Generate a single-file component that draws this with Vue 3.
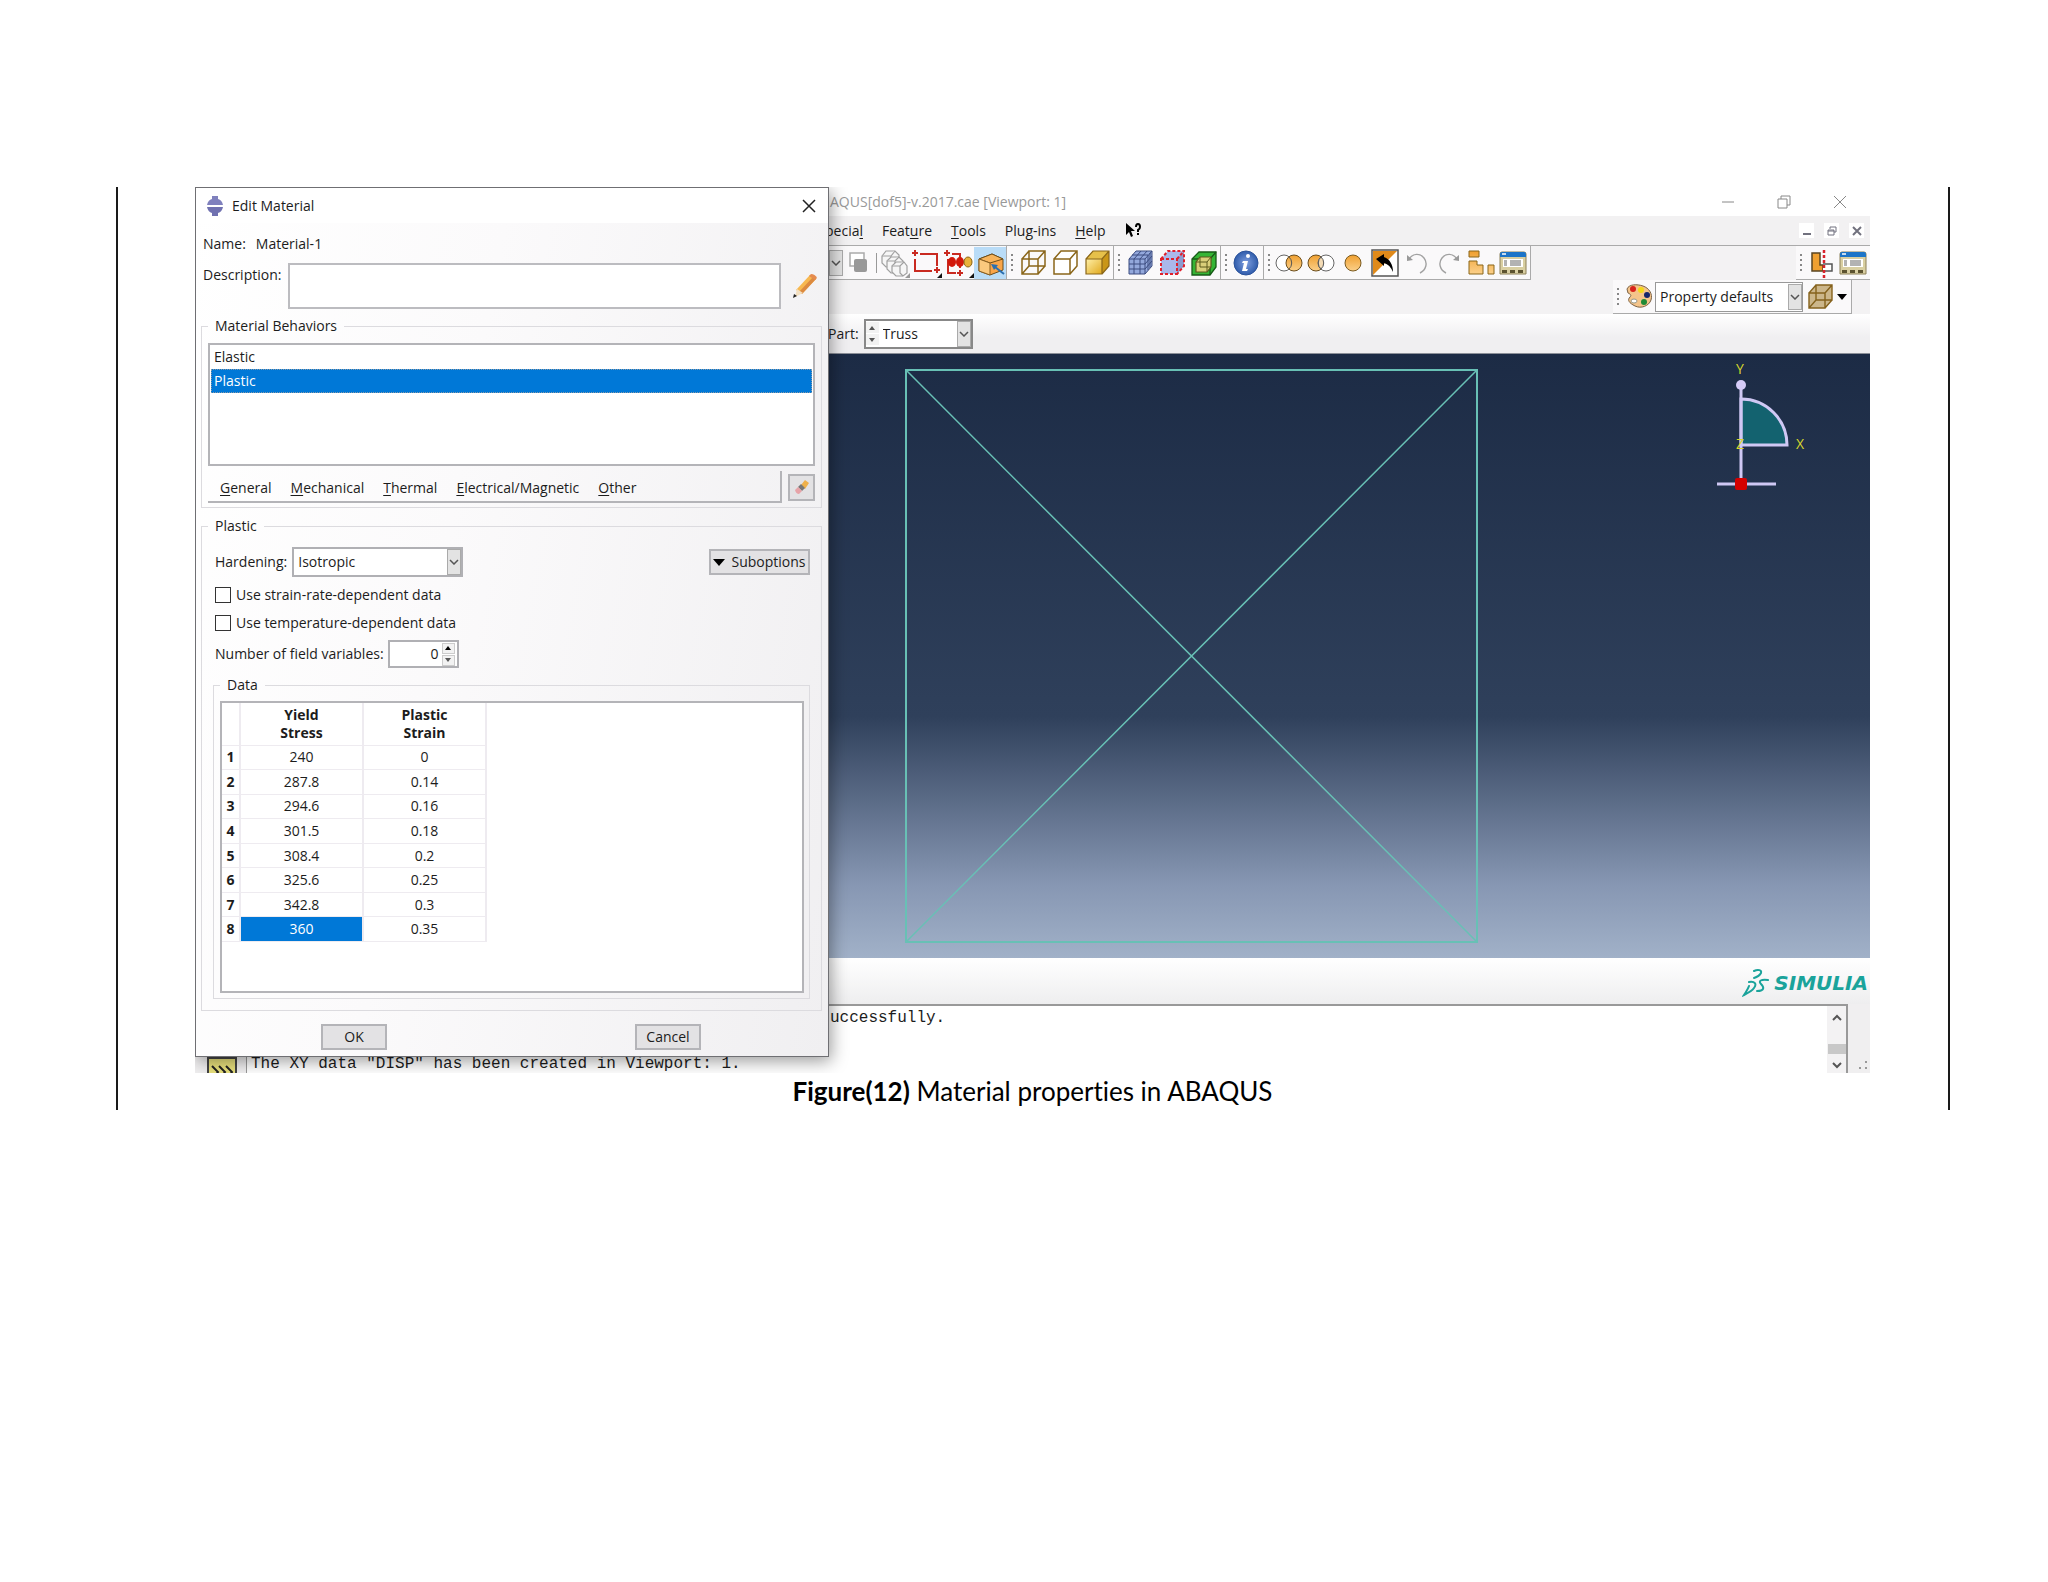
<script setup>
import {ref} from 'vue'

const behaviors = ['Elastic', 'Plastic']
const selectedBehavior = ref('Plastic')

const behaviorMenus = ['General', 'Mechanical', 'Thermal', 'Electrical/Magnetic', 'Other']

const rows = ref([
  {stress: '240', strain: '0'},
  {stress: '287.8', strain: '0.14'},
  {stress: '294.6', strain: '0.16'},
  {stress: '301.5', strain: '0.18'},
  {stress: '308.4', strain: '0.2'},
  {stress: '325.6', strain: '0.25'},
  {stress: '342.8', strain: '0.3'},
  {stress: '360', strain: '0.35'}
])
const selectedRow = ref(7)

// before / underlined letter / after
const menus = [
  ['pecia', 'l', ''],
  ['Feat', 'u', 're'],
  ['', 'T', 'ools'],
  ['Plu', 'g', '-ins'],
  ['', 'H', 'elp']
]

const toolGroups = [
  ['wire', 'hidden', 'shaded'],
  ['mesh', 'seeds', 'nested'],
  ['info'],
  ['replace', 'intersect', 'single', 'swap', 'undo', 'redo', 'shapes', 'panel']
]

const description = ref('')
const strainRate = ref(false)
const temperature = ref(false)
const fieldVariables = ref(0)

/**
 * stepVariables
 * @param by
 */
const stepVariables = (by) => {
  fieldVariables.value = Math.max(0, Number(fieldVariables.value) + by)
}
</script>

<template>
  <svg class="defs" width="0" height="0" aria-hidden="true">
    <defs>
      <linearGradient id="gold" x1="0" y1="0" x2="1" y2="1">
        <stop offset="0" stop-color="#fff0a8"/>
        <stop offset="1" stop-color="#e0a81c"/>
      </linearGradient>
      <linearGradient id="orange" x1="0" y1="0" x2="0" y2="1">
        <stop offset="0" stop-color="#f0a030"/>
        <stop offset="1" stop-color="#fbd08a"/>
      </linearGradient>
      <radialGradient id="blue">
        <stop offset="0" stop-color="#7f9fe0"/>
        <stop offset="1" stop-color="#2f5cab"/>
      </radialGradient>
    </defs>
    <symbol id="i-copy" viewBox="0 0 32 32">
      <rect x="7" y="6" width="14" height="13" fill="#fff" stroke="#aaa" stroke-width="1.5"/>
      <rect x="11" y="12" width="13" height="13" rx="2" fill="#999"/>
    </symbol>
    <symbol id="i-chain" viewBox="0 0 32 32">
      <g fill="#f6f6f6" stroke="#a0a0a0" stroke-width="1.2">
        <path d="M4 9l4-5h9l4 4v8l-4 4H8l-4-4z"/>
        <path d="M4 9h9l4-5M13 9v8"/>
        <path d="M9 14l4-4h8l4 4v8l-4 4h-8l-4-4z"/>
        <path d="M9 14h8l4-4M17 14v8"/>
        <path d="M14 19l4-4h8l3 4v7l-4 3h-7l-4-4z"/>
        <path d="M14 19h8l4-4M22 19v7l3 3"/>
      </g>
      <path d="M32 26v5h-5z" fill="#999"/>
    </symbol>
    <symbol id="i-box" viewBox="0 0 32 32">
      <g fill="none" stroke="#c92a20" stroke-width="2">
        <path d="M10 7h17v12M5 12v12h17"/>
        <path d="M2 6h6M5 3v6M24 23h6M27 20v6"/>
      </g>
      <path d="M32 26v5h-5z" fill="#111"/>
    </symbol>
    <symbol id="i-dots" viewBox="0 0 32 32">
      <g fill="none" stroke="#c92a20" stroke-width="2">
        <path d="M10 7h8v14M6 12v14h8"/>
        <path d="M2 6h6M5 3v6M15 26h6M18 23v6"/>
      </g>
      <ellipse cx="10" cy="15" rx="4" ry="5" fill="#d2190b"/>
      <ellipse cx="18" cy="15" rx="4" ry="5" fill="#d2190b"/>
      <ellipse cx="26" cy="15" rx="4" ry="5" fill="#e8b23a" stroke="#8a6414"/>
      <path d="M32 26v5h-5z" fill="#111"/>
    </symbol>
    <symbol id="i-solid" viewBox="0 0 32 32">
      <path d="M5 12l13-5 11 5v11l-13 5-11-4z" fill="#f9a548" stroke="#6b4d1c"/>
      <path d="M5 12l13-5 11 5-13 4z" fill="#f7b45c" stroke="#6b4d1c"/>
      <path d="M5 12l11 4v12l-11-4z" fill="#fbc97e" stroke="#8a5f20"/>
      <path d="M30 27l-9-7" stroke="#2a6fb0" stroke-width="2"/>
      <path d="M17 17l7 1-4 5z" fill="#2a6fb0"/>
    </symbol>
    <symbol id="i-wire" viewBox="0 0 32 32">
      <path d="M5 12h16v15H5zM12 4h16v15H12zM5 12l7-8M21 12l7-8M5 27l7-8M21 27l7-8" fill="none" stroke="#8a661a" stroke-width="1.5"/>
    </symbol>
    <symbol id="i-hidden" viewBox="0 0 32 32">
      <path d="M5 12h16v15H5zM5 12l7-8h16v15l-7 8M21 12l7-8" fill="#fff" stroke="#8a661a" stroke-width="1.5"/>
    </symbol>
    <symbol id="i-shaded" viewBox="0 0 32 32">
      <path d="M5 12l7-8h16v15l-7 8H5z" fill="#c99618"/>
      <path d="M5 12l7-8h16l-7 8z" fill="#e6c04a"/>
      <path d="M5 12h16v15H5z" fill="url(#gold)"/>
      <path d="M5 12h16v15H5zM5 12l7-8h16v15l-7 8M21 12l7-8" fill="none" stroke="#8a661a" stroke-width="1.2"/>
    </symbol>
    <symbol id="i-mesh" viewBox="0 0 32 32">
      <path d="M5 12l7-8h16v15l-7 8H5z" fill="#93a8dc"/>
      <path d="M5 12h16v15M10 12v15M16 12v15M5 17h16l7-8M5 22h16l7-8M10 12l7-8M16 12l7-8M21 12l7-8M8 8h16v15M26 6v15M5 12v15h16l7-8V4H12z" fill="none" stroke="#3c4d80" stroke-width="1"/>
    </symbol>
    <symbol id="i-seeds" viewBox="0 0 32 32">
      <path d="M5 12l7-8h16v15l-7 8H5z" fill="#aab8ea"/>
      <path d="M21 12l7-8v15l-7 8z" fill="#8d9cd0"/>
      <path d="M5 12h16v15H5zM5 12l7-8h16v15l-7 8M21 12l7-8" fill="none" stroke="#e0202c" stroke-width="2" stroke-dasharray="3 2"/>
    </symbol>
    <symbol id="i-nested" viewBox="0 0 32 32">
      <path d="M4 12l7-7h17v15l-6 8H4z" fill="#35b535" stroke="#175a17" stroke-width="1.3"/>
      <path d="M4 12h18v16M22 12l6-7" fill="none" stroke="#175a17" stroke-width="1.3"/>
      <path d="M8 15l4-5h11v10l-4 5H8z" fill="#d9cf7a" stroke="#5c5a1c" stroke-width="1.2"/>
      <path d="M8 15h11v10M19 15l4-5M12 10v10h11" fill="none" stroke="#5c5a1c" stroke-width="1"/>
    </symbol>
    <symbol id="i-info" viewBox="0 0 32 32">
      <circle cx="15" cy="16" r="12" fill="url(#blue)" stroke="#2c539b"/>
      <circle cx="17" cy="9" r="2" fill="#fff"/>
      <path d="M12 14h5l-2 8h2l-1 2h-5l2-8h-2z" fill="#fff"/>
    </symbol>
    <symbol id="i-replace" viewBox="0 0 32 32">
      <circle cx="10" cy="16" r="8" fill="#fff" stroke="#666"/>
      <circle cx="20" cy="16" r="8" fill="url(#orange)" stroke="#6b4d1c"/>
      <path d="M15 10a8 8 0 0 1 0 12" fill="none" stroke="#555"/>
    </symbol>
    <symbol id="i-intersect" viewBox="0 0 32 32">
      <circle cx="10" cy="16" r="8" fill="url(#orange)" stroke="#6b4d1c"/>
      <circle cx="20" cy="16" r="8" fill="#fff" stroke="#666"/>
      <path d="M15 10a8 8 0 0 1 0 12 8 8 0 0 1 0-12" fill="#f4dcb6" stroke="#555"/>
    </symbol>
    <symbol id="i-single" viewBox="0 0 32 32">
      <circle cx="15" cy="16" r="8" fill="url(#orange)" stroke="#7a5a20"/>
    </symbol>
    <symbol id="i-swap" viewBox="0 0 32 32">
      <rect x="2" y="3" width="26" height="26" fill="#fff" stroke="#555" stroke-width="1.5"/>
      <path d="M3 4h24L3 28z" fill="#e08a1a"/>
      <path d="M6 12l8-5v3c6 2 9 8 9 15-2-5-5-8-9-9v3z" fill="#000"/>
    </symbol>
    <symbol id="i-undo" viewBox="0 0 32 32">
      <path d="M7 12c4-6 11-6 15-1s2 12-4 15" fill="none" stroke="#a2a2a2" stroke-width="1.4"/>
      <path d="M5 8v6l6-1z" fill="#999"/>
    </symbol>
    <symbol id="i-redo" viewBox="0 0 32 32">
      <path d="M23 12c-4-6-11-6-15-1s-2 12 4 15" fill="none" stroke="#a2a2a2" stroke-width="1.4"/>
      <path d="M25 8v6l-6-1z" fill="#999"/>
    </symbol>
    <symbol id="i-shapes" viewBox="0 0 32 32">
      <g fill="url(#orange)" stroke="#8a661a">
        <path d="M3 4h10v6H3zM3 14h8v4h6v9H3zM22 18h6v9h-6z"/>
      </g>
    </symbol>
    <symbol id="i-panel" viewBox="0 0 32 32">
      <path d="M2 7q0-2 2-2h22q2 0 2 2v20H2z" fill="#d9cfa2" stroke="#8c8058"/>
      <path d="M2 7q0-2 2-2h22q2 0 2 2v3H2z" fill="#1c74c8"/>
      <path d="M4 7h4" stroke="#fff" stroke-width="1.5"/>
      <rect x="5" y="12" width="20" height="8" fill="#fff"/>
      <path d="M6 14h3M6 16h3M6 18h3M12 14h11M12 16h11M12 18h11" stroke="#666"/>
      <path d="M4 23h5v3H4zM12 23h5v3h-5zM20 23h5v3h-5z" fill="#5c5330"/>
    </symbol>
    <symbol id="i-section" viewBox="0 0 32 32">
      <path d="M6 6h8v12h3v6H6z" fill="#f0a030" stroke="#5a4420" stroke-width="1.5"/>
      <path d="M17 17h9v7h-9" fill="#fff" stroke="#555" stroke-width="1.5"/>
      <path d="M18 3v28" stroke="#d8232c" stroke-width="2.5" stroke-dasharray="3 2"/>
    </symbol>
    <symbol id="i-palette" viewBox="0 0 32 32">
      <path d="M4 8c2-5 10-5 16-3s10 8 8 14-10 9-16 6-8-6-5-9c2-2 0-3-2-4z" fill="#f5c48a" stroke="#7b6244"/>
      <circle cx="10" cy="8" r="3" fill="#d8231c"/>
      <circle cx="18" cy="9" r="3" fill="#f4d81a"/>
      <circle cx="24" cy="14" r="3" fill="#14246c"/>
      <circle cx="21" cy="21" r="3" fill="#1f8a35"/>
      <ellipse cx="11" cy="20" rx="3" ry="2" fill="#fff" stroke="#998"/>
    </symbol>
    <symbol id="i-translucent" viewBox="0 0 32 32">
      <path d="M4 12l7-8h16v15l-7 8H4z" fill="#ccb68a"/>
      <path d="M4 12h16v15H4zM11 4h16v15H11zM4 12l7-8M20 12l7-8M4 27l7-8M20 27l7-8" fill="none" stroke="#85621c" stroke-width="1.4"/>
    </symbol>
  </svg>

  <main class="page">
    <figure class="frame">
      <div class="desktop">
        <section class="app">
          <header class="app-title">
            <span class="app-name">AQUS[dof5]-v.2017.cae [Viewport: 1]</span>
            <div class="win-buttons">
              <button aria-label="Minimize">
                <svg width="14" height="14" viewBox="0 0 14 14"><path d="M1 7h12"/></svg>
              </button>
              <button aria-label="Restore">
                <svg width="14" height="14" viewBox="0 0 14 14"><path d="M1 4h9v9H1zM4 4V1h9v9h-3"/></svg>
              </button>
              <button aria-label="Close">
                <svg width="14" height="14" viewBox="0 0 14 14"><path d="M1 1l12 12M13 1L1 13"/></svg>
              </button>
            </div>
          </header>

          <nav class="menubar">
            <button v-for="menu in menus" :key="menu[1]">{{ menu[0] }}<u>{{ menu[1] }}</u>{{ menu[2] }}</button>
            <button aria-label="Context help">
              <svg width="17" height="16" viewBox="0 0 17 16">
                <path d="M1 0v12l3-3 2 5 2-1-2-5h4z" fill="#000"/>
                <path d="M11 4q0-3 2-3t2 3q0 2-2 3v2M13 10v2" fill="none" stroke="#000" stroke-width="2"/>
              </svg>
            </button>
            <div class="mdi-buttons">
              <button aria-label="Minimize viewport">
                <svg width="10" height="10" viewBox="0 0 10 10"><path d="M1 8h8" stroke-width="2"/></svg>
              </button>
              <button aria-label="Restore viewport">
                <svg width="10" height="10" viewBox="0 0 10 10"><path d="M3 3V1h6v5H7M1 4h6v5H1zM1 5h6"/></svg>
              </button>
              <button aria-label="Close viewport">
                <svg width="10" height="10" viewBox="0 0 10 10"><path d="M1 1l8 8M9 1L1 9" stroke-width="2"/></svg>
              </button>
            </div>
          </nav>

          <div class="toolbar">
            <div class="tools tools-first">
              <button class="arrow-box" aria-label="More">
                <svg width="10" height="6" viewBox="0 0 10 6"><path d="M1 1l4 4 4-4"/></svg>
              </button>
              <button class="tool" aria-label="copy"><svg><use href="#i-copy"/></svg></button>
              <span class="divider"></span>
              <button class="tool" aria-label="chain"><svg><use href="#i-chain"/></svg></button>
              <button class="tool" aria-label="box"><svg><use href="#i-box"/></svg></button>
              <button class="tool" aria-label="dots"><svg><use href="#i-dots"/></svg></button>
              <button class="tool active" aria-label="solid"><svg><use href="#i-solid"/></svg></button>
            </div>
            <div v-for="(group, index) in toolGroups" :key="index" class="tools">
              <span class="grip"></span>
              <button v-for="icon in group" :key="icon" class="tool" :aria-label="icon">
                <svg><use :href="`#i-${icon}`"/></svg>
              </button>
            </div>
            <div class="tools tools-last">
              <span class="grip"></span>
              <button class="tool" aria-label="section"><svg><use href="#i-section"/></svg></button>
              <button class="tool" aria-label="panel"><svg><use href="#i-panel"/></svg></button>
            </div>
          </div>

          <div class="toolbar toolbar-color">
            <div class="tools">
              <span class="grip"></span>
              <button class="tool" aria-label="palette"><svg><use href="#i-palette"/></svg></button>
              <div class="combo combo-color">
                <select aria-label="Color code">
                  <option>Property defaults</option>
                </select>
                <span class="arrow-box">
                  <svg width="10" height="6" viewBox="0 0 10 6"><path d="M1 1l4 4 4-4"/></svg>
                </span>
              </div>
              <button class="tool" aria-label="translucent"><svg><use href="#i-translucent"/></svg></button>
              <button class="drop" aria-label="Translucency">
                <svg width="10" height="6" viewBox="0 0 10 6"><path d="M0 0h10L5 6z"/></svg>
              </button>
            </div>
          </div>

          <div class="context">
            <label for="part">Part:</label>
            <div class="combo combo-part">
              <span class="spin">
                <button aria-label="Previous part"><svg width="6" height="4" viewBox="0 0 6 4"><path d="M0 4l3-4 3 4z"/></svg></button>
                <button aria-label="Next part"><svg width="6" height="4" viewBox="0 0 6 4"><path d="M0 0l3 4 3-4z"/></svg></button>
              </span>
              <select id="part">
                <option>Truss</option>
              </select>
              <span class="arrow-box">
                <svg width="10" height="6" viewBox="0 0 10 6"><path d="M1 1l4 4 4-4"/></svg>
              </span>
            </div>
          </div>

          <div class="viewport">
            <svg viewBox="0 0 1675 604" role="img" aria-label="Truss wireframe">
              <g fill="none" stroke="#68c0b5">
                <path d="M711 16h571v572H711z" stroke-width="2"/>
                <path d="M711 16l571 572M1282 16L711 588" stroke-width="1.5"/>
              </g>
              <path d="M1546 45a46 46 0 0 1 46 46h-46z" fill="#13626f" stroke="#cfc8f4" stroke-width="3"/>
              <path d="M1546 32v98M1522 130h59" stroke="#cfc8f4" stroke-width="3"/>
              <circle cx="1546" cy="31" r="5" fill="#d6ccf8"/>
              <rect x="1540" y="124" width="12" height="12" rx="2" fill="#d40000"/>
              <g class="axis" text-anchor="middle">
                <text x="1545" y="20">Y</text>
                <text x="1545" y="95">Z</text>
                <text x="1605" y="95">X</text>
              </g>
            </svg>
          </div>

          <div class="brand">
            <svg width="28" height="30" viewBox="0 0 28 30">
              <g fill="none" stroke="#1aa39b" stroke-width="2" stroke-linecap="round">
                <path d="M12 3c4-2 8-1 7 2-1 2-4 4-7 5"/>
                <path d="M7 14c6-1 8 2 5 6-2 3-6 5-10 7 2-3 4-6 5-9"/>
                <path d="M26 12c-7-1-10 1-7 4s4 7-4 7"/>
              </g>
            </svg>
            <span>SIMULIA</span>
          </div>

          <div class="messages">
            <div class="message-side">
              <svg width="30" height="30" viewBox="0 0 30 30">
                <rect x="1" y="1" width="28" height="28" fill="#e8e07c" stroke="#444" stroke-width="2"/>
                <path d="M5 9l6 6-4 5M12 9l6 6-4 5M19 9l6 6-4 5" fill="none" stroke="#222" stroke-width="2"/>
              </svg>
            </div>
            <div class="message-text">
              <p class="message-tail">uccessfully.</p>
              <p>The XY data "DISP" has been created in Viewport: 1.</p>
            </div>
            <div class="scrollbar">
              <svg width="10" height="8" viewBox="0 0 10 8"><path d="M1 6l4-4 4 4"/></svg>
              <span class="thumb"></span>
              <svg width="10" height="8" viewBox="0 0 10 8"><path d="M1 2l4 4 4-4"/></svg>
            </div>
            <div class="message-corner">
              <svg width="10" height="10" viewBox="0 0 10 10">
                <path d="M7 0h2v2H7zM7 6h2v2H7zM1 6h2v2H1z" fill="#999"/>
              </svg>
            </div>
          </div>
        </section>

        <form class="dialog" @submit.prevent>
          <header class="dialog-title">
            <svg width="18" height="20" viewBox="0 0 18 20">
              <path d="M6 0h6v3q4 1 5 6H1q1-5 5-6z" fill="#7f80bd"/>
              <path d="M6 20h6v-3q4-1 5-6H1q1 5 5 6z" fill="#7071b0"/>
            </svg>
            <h1>Edit Material</h1>
            <button type="button" aria-label="Close">
              <svg width="14" height="14" viewBox="0 0 14 14"><path d="M1 1l12 12M13 1L1 13"/></svg>
            </button>
          </header>

          <div class="dialog-body">
            <div class="name-row">
              <span>Name:</span>
              <span>Material-1</span>
            </div>

            <div class="description-row">
              <label for="description">Description:</label>
              <textarea id="description" v-model="description"></textarea>
              <button type="button" aria-label="Edit description">
                <svg width="26" height="26" viewBox="0 0 26 26">
                  <path d="M18 2l6 4L10 21l-6-4z" fill="#f7b850"/>
                  <path d="M21 4l3 2L10 21l-3-2z" fill="#dc8a40"/>
                  <path d="M19 1q4 0 6 4l-2 2-6-4z" fill="#e58b4e"/>
                  <path d="M5 16l6 4-8 4z" fill="#f3dfc0"/>
                  <path d="M2 21l3 2-4 2z" fill="#222"/>
                </svg>
              </button>
            </div>

            <fieldset class="behaviors">
              <legend>Material Behaviors</legend>
              <ul class="list" role="listbox" aria-label="Material Behaviors">
                <li
                    v-for="item in behaviors"
                    :key="item"
                    role="option"
                    :aria-selected="item === selectedBehavior"
                    :class="{selected: item === selectedBehavior}"
                    @click="selectedBehavior = item"
                >{{ item }}</li>
              </ul>
              <div class="behavior-bar">
                <nav class="behavior-menus">
                  <button v-for="menu in behaviorMenus" :key="menu" type="button"><u>{{ menu[0] }}</u>{{ menu.slice(1) }}</button>
                </nav>
                <button class="eraser" type="button" aria-label="Delete behavior">
                  <svg width="16" height="16" viewBox="0 0 16 16">
                    <path d="M11 1l4 3-4 6-4-4z" fill="#eeb04a"/>
                    <path d="M7 5l4 4-3 3-4-4z" fill="#777"/>
                    <path d="M4 8l4 4-3 3q-3 0-4-4z" fill="#e7a3a8"/>
                  </svg>
                </button>
              </div>
            </fieldset>

            <fieldset class="plastic">
              <legend>Plastic</legend>
              <div class="hardening-row">
                <label for="hardening">Hardening:</label>
                <div class="combo combo-hardening">
                  <select id="hardening">
                    <option>Isotropic</option>
                  </select>
                  <span class="arrow-box">
                    <svg width="10" height="6" viewBox="0 0 10 6"><path d="M1 1l4 4 4-4"/></svg>
                  </span>
                </div>
                <button class="push suboptions" type="button">
                  <svg width="12" height="7" viewBox="0 0 12 7"><path d="M0 0h12L6 7z"/></svg>
                  Suboptions
                </button>
              </div>
              <label class="check"><input v-model="strainRate" type="checkbox">Use strain-rate-dependent data</label>
              <label class="check"><input v-model="temperature" type="checkbox">Use temperature-dependent data</label>
              <div class="variables-row">
                <label for="variables">Number of field variables:</label>
                <div class="number">
                  <input id="variables" v-model="fieldVariables" type="text">
                  <span class="spin spin-raised">
                    <button type="button" aria-label="Increase" @click="stepVariables(1)"><svg width="6" height="4" viewBox="0 0 6 4"><path d="M0 4l3-4 3 4z"/></svg></button>
                    <button type="button" aria-label="Decrease" @click="stepVariables(-1)"><svg width="6" height="4" viewBox="0 0 6 4"><path d="M0 0l3 4 3-4z"/></svg></button>
                  </span>
                </div>
              </div>

              <fieldset class="data">
                <legend>Data</legend>
                <div class="table-box">
                  <table>
                    <thead>
                      <tr>
                        <td></td>
                        <th scope="col">Yield<br>Stress</th>
                        <th scope="col">Plastic<br>Strain</th>
                      </tr>
                    </thead>
                    <tbody>
                      <tr v-for="(row, index) in rows" :key="index">
                        <th scope="row">{{ index + 1 }}</th>
                        <td :class="{selected: index === selectedRow}" @click="selectedRow = index">{{ row.stress }}</td>
                        <td>{{ row.strain }}</td>
                      </tr>
                    </tbody>
                  </table>
                </div>
              </fieldset>
            </fieldset>

            <div class="actions">
              <button class="push" type="submit">OK</button>
              <button class="push" type="button">Cancel</button>
            </div>
          </div>
        </form>
      </div>
      <figcaption><b>Figure(12)</b> Material properties in ABAQUS</figcaption>
    </figure>
  </main>
</template>

<style>
body {
  background: #fff;
}
</style>

<style scoped>
* {
  box-sizing: border-box;
}

.defs {
  position: absolute;
}

.page {
  --dialog-width: 634px;
  padding: 187px 98px 40px 116px;
  font-family: "Open Sans", "Noto Sans", sans-serif;
  font-size: 14px;
  line-height: 20px;
  color: #1c1c1c;
}

button, input, select, textarea {
  font: inherit;
  color: inherit;
}

button {
  padding: 0;
  border: 0;
  background: none;
}

svg {
  display: block;
}

u {
  text-underline-offset: 2px;
}

.frame {
  margin: 0;
  padding: 0 78px 0 77px;
  border: solid #1a1a1a;
  border-width: 0 2px;
}

.desktop {
  position: relative;
  overflow: hidden;
}

figcaption {
  font-family: Lato, sans-serif;
  font-size: 26px;
  line-height: 37px;
  font-variant-ligatures: none;
  text-align: center;
  color: #000;
}

/* main window */
.app-title {
  display: flex;
  justify-content: space-between;
  align-items: center;
  height: 29px;
  padding: 0 23px 0 calc(var(--dialog-width) + 1px);
  color: #999;
}

.win-buttons {
  display: flex;
  gap: 42px;
}

.win-buttons path {
  fill: none;
  stroke: #888;
}

.menubar {
  display: flex;
  align-items: center;
  gap: 19px;
  height: 30px;
  padding: 0 6px 0 calc(var(--dialog-width) - 4px);
  background: #f2f1f2;
  border-bottom: 1px solid #aaa;
}

.mdi-buttons {
  display: flex;
  gap: 10px;
  margin-left: auto;
}

.mdi-buttons button {
  display: grid;
  place-items: center;
  width: 15px;
  height: 15px;
  background: #fff;
}

.mdi-buttons path {
  fill: none;
  stroke: #71717e;
}

.toolbar {
  display: flex;
  height: 34px;
  background: #f3f2f3;
}

.tools {
  display: flex;
  align-items: center;
  background: #faf9fa;
  border: solid #aaa;
  border-width: 0 1px 1px 0;
}

.tools-first {
  justify-content: flex-end;
  width: 812px;
}

.tools-last {
  margin-left: auto;
  border-right: 0;
}

.toolbar-color {
  justify-content: flex-end;
  padding-right: 18px;
}

.tool {
  width: 32px;
  height: 32px;
}

.tool svg {
  width: 32px;
  height: 32px;
}

.tool.active {
  background: #b9dcf7;
}

.grip {
  width: 2px;
  height: 18px;
  margin: 0 4px;
  background: repeating-linear-gradient(#888 0 2px, transparent 2px 5px);
}

.divider {
  width: 1px;
  height: 20px;
  margin: 0 1px;
  background: #999;
}

.arrow-box {
  display: grid;
  place-items: center;
  width: 14px;
  height: 26px;
  background: #e3e3e3;
  border: 1px solid #aaa;
  pointer-events: none;
}

.arrow-box path {
  fill: none;
  stroke: #555;
  stroke-width: 1.5px;
}

.combo {
  display: flex;
  align-items: center;
  height: 30px;
  background: #fff;
  border: 1px solid #999;
}

.combo select {
  flex: 1;
  min-width: 0;
  height: 100%;
  padding: 0 14px 0 4px;
  margin-right: -14px;
  border: 0;
  background: none;
  appearance: none;
}

.combo-color {
  width: 148px;
  margin-right: 2px;
}

.drop {
  padding: 0 4px 0 0;
}

.context {
  display: flex;
  align-items: center;
  gap: 5px;
  height: 40px;
  padding-left: calc(var(--dialog-width) - 1px);
  background: linear-gradient(#fff, #f0eff1 60%);
  border-bottom: 1px solid #8b8f98;
}

.combo-part {
  width: 109px;
  border: 2px solid #888;
}

.spin {
  display: flex;
  flex-direction: column;
  gap: 1px;
}

.spin button {
  display: grid;
  place-items: center;
  width: 13px;
  height: 11px;
  background: #f2f2f2;
}

.spin path {
  fill: #555;
}

.viewport {
  background: linear-gradient(#1c2b45, #2f405b 60%, #8797b3 88%, #a1b1c8);
}

.viewport svg {
  width: 100%;
  height: auto;
}

.axis text {
  font-family: "Open Sans", sans-serif;
  font-size: 14px;
  fill: #d8d82c;
}

.brand {
  display: flex;
  justify-content: flex-end;
  align-items: center;
  gap: 4px;
  height: 46px;
  padding: 3px 2px 0 0;
  background: linear-gradient(#fff, #eeeeef);
  font-family: "DejaVu Sans", sans-serif;
  font-size: 20px;
  font-style: italic;
  font-weight: 700;
  color: #1aa39b;
}

.messages {
  display: flex;
  height: 69px;
  overflow: hidden;
  background: #f0eff0;
}

.message-side {
  display: flex;
  align-items: flex-end;
  width: 51px;
  padding-left: 12px;
}

.message-side svg {
  margin-bottom: -14px;
}

.message-text {
  flex: 1;
  display: flex;
  flex-direction: column;
  gap: 28px;
  padding: 3px 0 0 4px;
  background: #fff;
  border: solid #999;
  border-width: 2px 0 0 1px;
  font-family: "Liberation Mono", monospace;
  font-size: 16px;
  line-height: 18px;
  white-space: nowrap;
}

.message-text p {
  margin: 0;
}

.message-text .message-tail {
  padding-left: 579px;
}

.scrollbar {
  display: flex;
  flex-direction: column;
  align-items: center;
  justify-content: space-between;
  width: 21px;
  padding: 8px 0 4px;
  background: #f3f2f3;
  border: solid #999;
  border-width: 2px 2px 0 0;
}

.scrollbar path {
  fill: none;
  stroke: #555;
  stroke-width: 2px;
}

.thumb {
  width: 18px;
  height: 10px;
  margin-top: 14px;
  background: #c8c8c8;
}

.message-corner {
  display: flex;
  justify-content: flex-end;
  align-items: flex-end;
  width: 22px;
  padding: 2px;
}

/* dialog */
.dialog {
  position: absolute;
  top: 0;
  left: 0;
  width: var(--dialog-width);
  border: 1px solid #6f6f73;
  background: linear-gradient(100deg, #fff, #fbfafb 40%, #f0eff1);
  box-shadow: 2px 4px 16px rgb(0 0 0 / 0.4);
}

.dialog-title {
  display: flex;
  align-items: center;
  gap: 8px;
  height: 35px;
  padding: 0 12px 0 10px;
  background: #fff;
}

.dialog-title h1 {
  flex: 1;
  margin: 0;
  font-size: 14px;
  font-weight: 400;
}

.dialog-title button path {
  fill: none;
  stroke: #222;
  stroke-width: 1.5px;
}

.dialog-body {
  padding: 11px 6px 6px 5px;
}

.name-row {
  display: flex;
  gap: 10px;
  padding-left: 2px;
}

.description-row {
  display: flex;
  gap: 7px;
  margin-top: 9px;
  padding-left: 2px;
}

.description-row label {
  padding-top: 2px;
}

.description-row textarea {
  flex: 1;
  height: 46px;
  border: 2px solid #bcbcc0;
  background: #fff;
  resize: none;
}

.description-row button {
  padding: 0 4px;
}

fieldset {
  min-width: 0;
  margin: 0;
  border: 1px solid #dcdbdf;
}

legend {
  padding: 0 7px;
}

.behaviors {
  margin-top: 7px;
  padding: 7px 6px 4px;
}

.list {
  height: 123px;
  margin: 0;
  padding: 0 1px;
  list-style: none;
  background: #fff;
  border: 2px solid #b4b4b8;
}

.list li {
  height: 24px;
  padding: 0 2px;
  line-height: 22px;
  border: 1px solid transparent;
}

.list .selected {
  color: #fff;
  background: #0078d7;
  border: 1px dotted #8a9aa8;
}

.behavior-bar {
  display: flex;
  align-items: center;
  gap: 6px;
  height: 32px;
  margin-top: 5px;
}

.behavior-menus {
  flex: 1;
  display: flex;
  align-items: center;
  gap: 19px;
  height: 100%;
  padding: 3px 0 0 12px;
  border: solid #b4b4b8;
  border-width: 0 2px 2px 0;
}

.eraser {
  display: grid;
  place-items: center;
  width: 27px;
  height: 27px;
  background: #e3e2e4;
  border: 2px solid #b4b4b8;
}

.plastic {
  display: flex;
  flex-direction: column;
  gap: 7px;
  margin-top: 8px;
  padding: 11px 11px 11px;
}

.plastic > legend {
  margin-left: -5px;
}

.hardening-row {
  display: flex;
  align-items: center;
  gap: 5px;
  padding-left: 2px;
}

.combo-hardening {
  width: 171px;
  border: 2px solid #b0b0b4;
}

.push {
  display: flex;
  justify-content: center;
  align-items: center;
  width: 66px;
  height: 26px;
  background: #e3e2e4;
  border: 2px solid #b4b4b8;
}

.suboptions {
  gap: 6px;
  width: 101px;
  margin-left: auto;
}

.check {
  display: flex;
  align-items: center;
  gap: 5px;
  height: 21px;
  padding-left: 2px;
}

.check input {
  width: 16px;
  height: 16px;
  margin: 0;
  background: #fff;
  border: 1px solid #333;
  appearance: none;
}

.check input:checked {
  background: #0078d7;
}

.variables-row {
  display: flex;
  align-items: center;
  gap: 4px;
  padding-left: 2px;
}

.number {
  display: flex;
  align-items: center;
  width: 71px;
  height: 28px;
  padding-right: 2px;
  background: #fff;
  border: 2px solid #b0b0b4;
}

.number input {
  flex: 1;
  min-width: 0;
  padding: 0 3px;
  border: 0;
  background: none;
  text-align: right;
}

.spin-raised button {
  border: 1px solid #ccc;
}

.spin-raised button:first-child path {
  fill: #000;
}

.data {
  padding: 6px 5px 5px 6px;
}

.table-box {
  height: 292px;
  background: #fff;
  border: 2px solid #b4b4b8;
}

table {
  height: 239px;
  border-collapse: collapse;
  table-layout: fixed;
}

th, td {
  width: 123px;
  height: 24px;
  padding: 0;
  text-align: center;
  border: solid #eeebf0;
  border-width: 0 2px 1px 0;
}

tr > :first-child {
  width: 18px;
}

thead th {
  height: 42px;
  line-height: 18px;
}

td.selected {
  color: #fff;
  background: #0078d7;
}

.actions {
  display: flex;
  justify-content: space-between;
  margin-top: 13px;
  padding: 0 121px 0 120px;
}
</style>
